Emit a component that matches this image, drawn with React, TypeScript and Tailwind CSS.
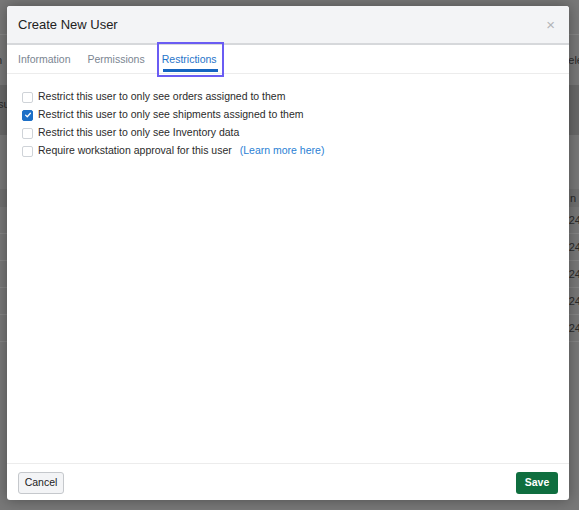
import { useState } from "react";

const FONT = { fontFamily: '"Liberation Sans", Arial, Helvetica, sans-serif' };

type Restriction = { id: string; label: string; link?: string };

const RESTRICTIONS: Restriction[] = [
  { id: "orders", label: "Restrict this user to only see orders assigned to them" },
  { id: "shipments", label: "Restrict this user to only see shipments assigned to them" },
  { id: "inventory", label: "Restrict this user to only see Inventory data" },
  { id: "workstation", label: "Require workstation approval for this user", link: "(Learn more here)" },
];

function BackgroundPage() {
  // the page behind the dialog; only its edges stay visible
  return (
    <div className="flex h-full w-full flex-col text-[11px] text-[#2a2a2a]">
      <div className="h-[35px] border-b border-[#858585]" />
      <div className="flex h-[50px] items-center justify-between">
        <span className="-ml-[4px]">n</span>
        <span className="-mr-[4px]">ele</span>
      </div>
      <div className="flex h-[50px] items-start bg-[#686868] pt-[11px]">
        <span className="-ml-[2px]">su</span>
      </div>
      <div className="h-[54px]" />
      <div className="flex h-[18px] items-center justify-end bg-[#707070]">
        <span className="mr-[3px]">n</span>
      </div>
      {[0, 1, 2, 3, 4].map((i) => (
        <div key={i} className="flex h-[27px] items-center justify-end border-b border-[#858585]">
          <span className="-mr-[2px]">24</span>
        </div>
      ))}
    </div>
  );
}

function Checkbox({ checked, onChange }: { checked: boolean; onChange: () => void }) {
  return (
    <button
      type="button"
      onClick={onChange}
      className={`flex h-[11px] w-[11px] shrink-0 items-center justify-center rounded-[2px] border ${
        checked ? "border-[#1c6fc7] bg-[#1c6fc7]" : "border-[#cfd3d8] bg-white"
      }`}
    >
      {checked ? (
        <svg viewBox="0 0 10 10" className="h-[8px] w-[8px]">
          <path d="M2 5.2 L4.1 7.2 L8 2.8" fill="none" stroke="white" strokeWidth="1.6" strokeLinecap="round" strokeLinejoin="round" />
        </svg>
      ) : null}
    </button>
  );
}

export default function App() {
  const [checked, setChecked] = useState<Record<string, boolean>>({ shipments: true });
  const tabs = ["Information", "Permissions", "Restrictions"];
  const active = "Restrictions";

  return (
    <div className="relative h-[510px] w-[579px] overflow-hidden bg-[#787878]" style={FONT}>
      <BackgroundPage />

      <div className="absolute left-[7px] top-[6px] flex h-[494px] w-[562px] flex-col rounded-[3px] bg-white shadow-[0_0_14px_rgba(0,0,0,0.35)]">
        <div className="flex h-[39px] shrink-0 items-center justify-between rounded-t-[3px] border-b-2 border-[#d6d8db] bg-[#f3f4f6] pl-[11px] pr-[14px]">
          <h2 className="pt-[1px] text-[13px] text-[#222]">Create New User</h2>
          <span className="text-[15px] leading-none text-[#b2b5b9]">×</span>
        </div>

        <div className="flex h-[29px] shrink-0 items-stretch gap-[17px] border-b border-[#ececec] pl-[11px] pt-[1px]">
          {tabs.map((t) =>
            t === active ? (
              <div key={t} className="relative flex items-center text-[10.5px] text-[#1f74c9]">
                {t}
                <span className="absolute bottom-[1px] left-[1px] right-[-1px] h-[3px] bg-[#1565c0]" />
                <span className="absolute -bottom-[4px] -left-[5px] -right-[7px] -top-[4px] border-2 border-[#6a5cf3]" />
              </div>
            ) : (
              <div key={t} className="flex items-center text-[10.5px] text-[#7b8591]">
                {t}
              </div>
            )
          )}
        </div>

        <div className="flex flex-1 flex-col pl-[15px] pt-[14px]">
          {RESTRICTIONS.map((r) => (
            <label key={r.id} className="flex h-[18px] items-center gap-[5px] text-[10.5px] text-[#2b2b2b]">
              <Checkbox
                checked={!!checked[r.id]}
                onChange={() => setChecked((c) => ({ ...c, [r.id]: !c[r.id] }))}
              />
              <span>{r.label}</span>
              {r.link ? <a className="ml-[3px] text-[#2a81d4]">{r.link}</a> : null}
            </label>
          ))}
        </div>

        <div className="flex h-[37px] shrink-0 items-start justify-between border-t border-[#ececec] px-[11px] pt-[8px]">
          <button
            type="button"
            className="h-[22px] w-[46px] rounded-[3px] border border-[#c5c8cc] bg-[#f3f4f6] text-[10.5px] text-[#222]"
          >
            Cancel
          </button>
          <button
            type="button"
            className="h-[22px] w-[42px] rounded-[3px] bg-[#0f6e3f] text-[10.5px] font-bold text-white"
          >
            Save
          </button>
        </div>
      </div>
    </div>
  );
}
